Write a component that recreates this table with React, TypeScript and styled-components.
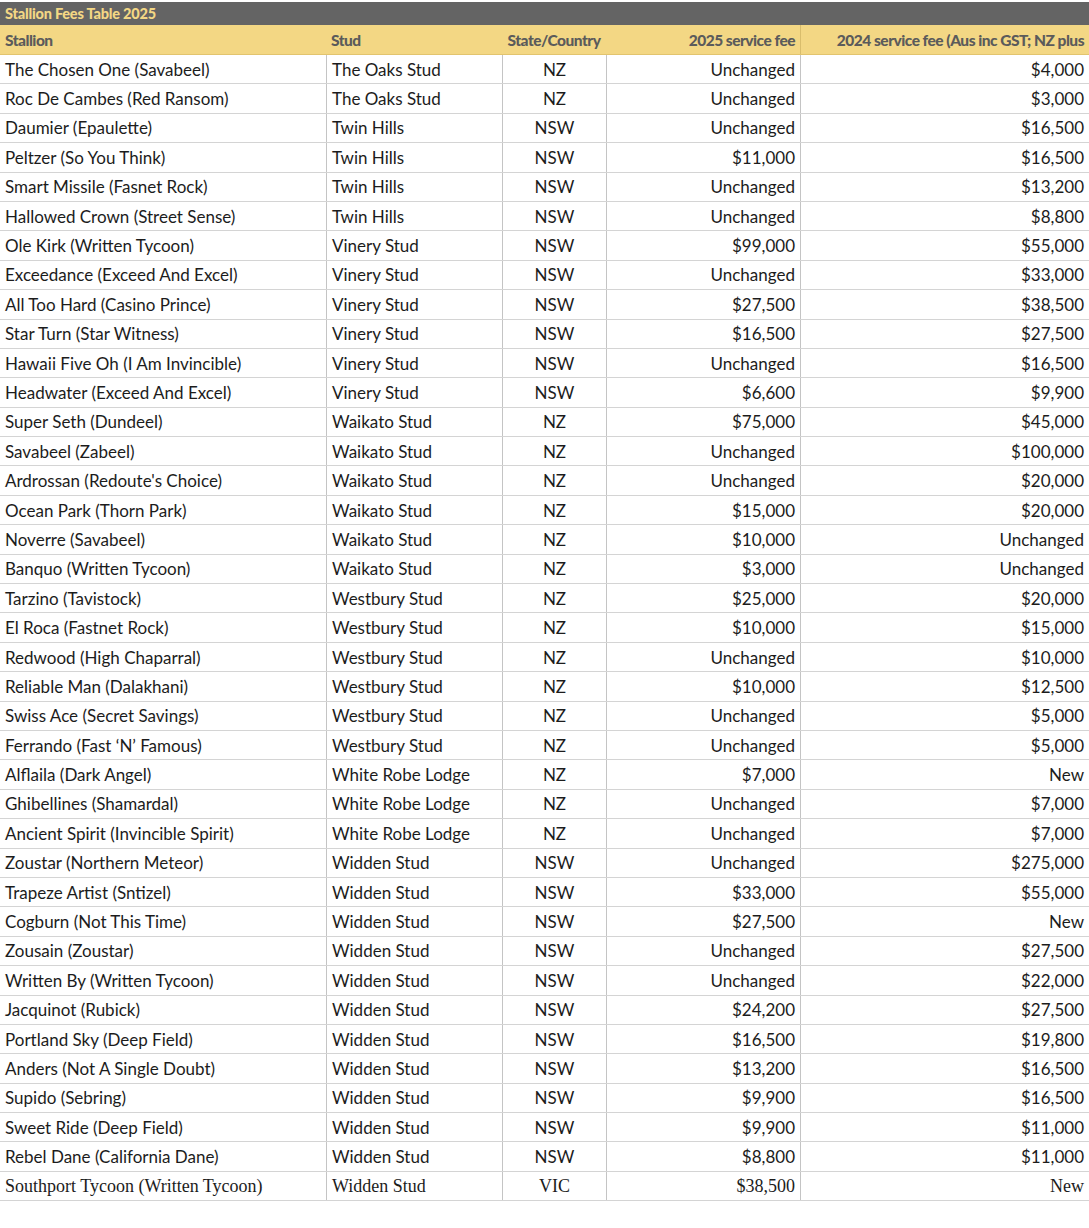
import styled, { createGlobalStyle } from "styled-components";

const GlobalStyle = createGlobalStyle`
  html, body {
    margin: 0;
    padding: 0;
    background: #ffffff;
  }
  body {
    font-family: Lato, "Open Sans", Arial, sans-serif;
    overflow-x: hidden;
  }
`;

const COLS = "326px 176px 104px 194px 289px";

const Wrap = styled.div`
  width: 1089px;
  padding-top: 2px;
  overflow: hidden;
  color: #1c1c1c;
`;

const TitleBar = styled.div`
  height: 23px;
  display: flex;
  align-items: center;
  padding: 0 5px;
  background: #646464;
  color: #f3d784;
  font-weight: 900;
  font-size: 14.5px;
  letter-spacing: -0.2px;
`;

const HeadRow = styled.div`
  display: grid;
  grid-template-columns: ${COLS};
  height: 30px;
  box-sizing: border-box;
  background: #f3d784;
  border-bottom: 1px solid #e2c46e;
`;

const HeadCell = styled.div<{ $align?: string; $line?: boolean }>`
  display: flex;
  align-items: center;
  justify-content: ${(p) => p.$align || "flex-start"};
  padding: 0 5px;
  color: #5b5b5b;
  font-weight: 900;
  font-size: 15.5px;
  letter-spacing: -0.5px;
  white-space: nowrap;
  overflow: hidden;
  border-left: ${(p) => (p.$line ? "1px solid #d9bd6c" : "none")};
`;

const Row = styled.div`
  display: grid;
  grid-template-columns: ${COLS};
  height: 29.4px;
  box-sizing: border-box;
  border-bottom: 1px solid #d4d4d4;
`;

const Cell = styled.div<{ $align?: string; $serif?: boolean }>`
  display: flex;
  align-items: center;
  justify-content: ${(p) => p.$align || "flex-start"};
  padding: 0 5px;
  white-space: nowrap;
  overflow: hidden;
  font-family: ${(p) =>
    p.$serif ? '"Liberation Serif", "DejaVu Serif", serif' : "inherit"};
  font-size: ${(p) => (p.$serif ? "18px" : "17px")};
  & + & {
    border-left: 1px solid #c4c4c4;
  }
`;

type Entry = [string, string, string, string, string];

const rows: Entry[] = [
  ["The Chosen One (Savabeel)", "The Oaks Stud", "NZ", "Unchanged", "$4,000"],
  ["Roc De Cambes (Red Ransom)", "The Oaks Stud", "NZ", "Unchanged", "$3,000"],
  ["Daumier (Epaulette)", "Twin Hills", "NSW", "Unchanged", "$16,500"],
  ["Peltzer (So You Think)", "Twin Hills", "NSW", "$11,000", "$16,500"],
  ["Smart Missile (Fasnet Rock)", "Twin Hills", "NSW", "Unchanged", "$13,200"],
  ["Hallowed Crown (Street Sense)", "Twin Hills", "NSW", "Unchanged", "$8,800"],
  ["Ole Kirk (Written Tycoon)", "Vinery Stud", "NSW", "$99,000", "$55,000"],
  ["Exceedance (Exceed And Excel)", "Vinery Stud", "NSW", "Unchanged", "$33,000"],
  ["All Too Hard (Casino Prince)", "Vinery Stud", "NSW", "$27,500", "$38,500"],
  ["Star Turn (Star Witness)", "Vinery Stud", "NSW", "$16,500", "$27,500"],
  ["Hawaii Five Oh (I Am Invincible)", "Vinery Stud", "NSW", "Unchanged", "$16,500"],
  ["Headwater (Exceed And Excel)", "Vinery Stud", "NSW", "$6,600", "$9,900"],
  ["Super Seth (Dundeel)", "Waikato Stud", "NZ", "$75,000", "$45,000"],
  ["Savabeel (Zabeel)", "Waikato Stud", "NZ", "Unchanged", "$100,000"],
  ["Ardrossan (Redoute's Choice)", "Waikato Stud", "NZ", "Unchanged", "$20,000"],
  ["Ocean Park (Thorn Park)", "Waikato Stud", "NZ", "$15,000", "$20,000"],
  ["Noverre (Savabeel)", "Waikato Stud", "NZ", "$10,000", "Unchanged"],
  ["Banquo (Written Tycoon)", "Waikato Stud", "NZ", "$3,000", "Unchanged"],
  ["Tarzino (Tavistock)", "Westbury Stud", "NZ", "$25,000", "$20,000"],
  ["El Roca (Fastnet Rock)", "Westbury Stud", "NZ", "$10,000", "$15,000"],
  ["Redwood (High Chaparral)", "Westbury Stud", "NZ", "Unchanged", "$10,000"],
  ["Reliable Man (Dalakhani)", "Westbury Stud", "NZ", "$10,000", "$12,500"],
  ["Swiss Ace (Secret Savings)", "Westbury Stud", "NZ", "Unchanged", "$5,000"],
  ["Ferrando (Fast \u2018N\u2019 Famous)", "Westbury Stud", "NZ", "Unchanged", "$5,000"],
  ["Alflaila (Dark Angel)", "White Robe Lodge", "NZ", "$7,000", "New"],
  ["Ghibellines (Shamardal)", "White Robe Lodge", "NZ", "Unchanged", "$7,000"],
  ["Ancient Spirit (Invincible Spirit)", "White Robe Lodge", "NZ", "Unchanged", "$7,000"],
  ["Zoustar (Northern Meteor)", "Widden Stud", "NSW", "Unchanged", "$275,000"],
  ["Trapeze Artist (Sntizel)", "Widden Stud", "NSW", "$33,000", "$55,000"],
  ["Cogburn (Not This Time)", "Widden Stud", "NSW", "$27,500", "New"],
  ["Zousain (Zoustar)", "Widden Stud", "NSW", "Unchanged", "$27,500"],
  ["Written By (Written Tycoon)", "Widden Stud", "NSW", "Unchanged", "$22,000"],
  ["Jacquinot (Rubick)", "Widden Stud", "NSW", "$24,200", "$27,500"],
  ["Portland Sky (Deep Field)", "Widden Stud", "NSW", "$16,500", "$19,800"],
  ["Anders (Not A Single Doubt)", "Widden Stud", "NSW", "$13,200", "$16,500"],
  ["Supido (Sebring)", "Widden Stud", "NSW", "$9,900", "$16,500"],
  ["Sweet Ride (Deep Field)", "Widden Stud", "NSW", "$9,900", "$11,000"],
  ["Rebel Dane (California Dane)", "Widden Stud", "NSW", "$8,800", "$11,000"],
];

const lastRow: Entry = ["Southport Tycoon (Written Tycoon)", "Widden Stud", "VIC", "$38,500", "New"];

function FeeRow({ entry, serif }: { entry: Entry; serif?: boolean }) {
  const [horse, stud, state, fee25, fee24] = entry;
  return (
    <Row>
      <Cell $serif={serif}>{horse}</Cell>
      <Cell $serif={serif}>{stud}</Cell>
      <Cell $serif={serif} $align="center">{state}</Cell>
      <Cell $serif={serif} $align="flex-end">{fee25}</Cell>
      <Cell $serif={serif} $align="flex-end">{fee24}</Cell>
    </Row>
  );
}

export default function App() {
  return (
    <Wrap>
      <GlobalStyle />
      <TitleBar>Stallion Fees Table 2025</TitleBar>
      <HeadRow>
        <HeadCell>Stallion</HeadCell>
        <HeadCell>Stud</HeadCell>
        <HeadCell $align="center">State/Country</HeadCell>
        <HeadCell $align="flex-end">2025 service fee</HeadCell>
        <HeadCell $align="flex-end" $line>2024 service fee (Aus inc GST; NZ plus</HeadCell>
      </HeadRow>
      {rows.map((r) => (
        <FeeRow key={r[0]} entry={r} />
      ))}
      <FeeRow entry={lastRow} serif />
    </Wrap>
  );
}
